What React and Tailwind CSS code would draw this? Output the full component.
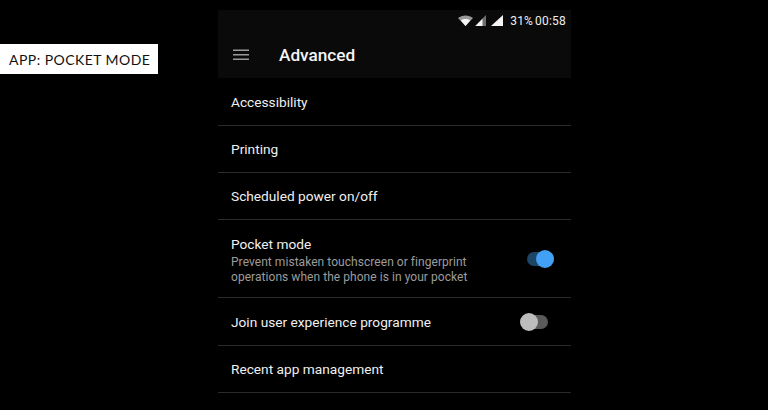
import React from "react";

function Toggle({ on }) {
  return on ? (
    <div className="relative w-[27px] h-[14px] rounded-full bg-[#1d4566]">
      <div className="absolute right-0 top-[-2px] w-[18px] h-[18px] rounded-full bg-[#42a0f5]" />
    </div>
  ) : (
    <div className="relative w-[27px] h-[14px] rounded-full bg-[#5a5a5a]">
      <div className="absolute left-[-1px] top-[-2px] w-[18px] h-[18px] rounded-full bg-[#bdbdbd]" />
    </div>
  );
}

function Row({ title, h = "h-[47px]", children, right, textClass = "" }) {
  return (
    <div className={`${h} flex items-center justify-between pl-[13px] pr-[17px] border-b border-[#2a2a2a]`}>
      <div className={textClass}>
        <div className="text-[13.7px] leading-[18px] text-[#f0f0f0]">{title}</div>
        {children}
      </div>
      {right}
    </div>
  );
}

export default function App() {
  return (
    <div className="w-[768px] h-[410px] bg-black overflow-hidden flex items-start font-['Roboto',sans-serif]">
      <div className="w-[218px] shrink-0 pt-[44px]">
        <div className="w-[158px] h-[30px] bg-white flex items-center pl-[9px] text-[14px] tracking-[0.45px] text-[#111] font-['Lato',sans-serif] whitespace-nowrap">
          APP: POCKET MODE
        </div>
      </div>
      <div className="w-[353px] shrink-0 mt-[10px]">
        <div className="h-[68px] bg-[#0a0a0a] flex flex-col">
          <div className="h-[21px] flex items-center justify-end pr-[5px] text-[#eeeeee] text-[12px] tracking-[0.2px]">
            <svg width="15" height="11" viewBox="0 0 15 11" className="mr-[2px]">
              <path d="M0 3 C4 -0.5 11 -0.5 15 3 L7.5 11 Z" fill="#9a9a9a" />
              <path d="M2.8 5.4 C5.5 3.6 9.5 3.6 12.2 5.4 L7.5 11 Z" fill="#f5f5f5" />
            </svg>
            <svg width="12" height="11" viewBox="0 0 12 11" className="mr-[4px]">
              <path d="M11 0 V11 H0 Z" fill="#6e6e6e" />
              <path d="M7.5 3.8 V11 H0.5 Z" fill="#f5f5f5" />
            </svg>
            <svg width="12" height="11" viewBox="0 0 12 11" className="mr-[7px]">
              <path d="M12 0 V11 H0 Z" fill="#f5f5f5" />
            </svg>
            <span className="whitespace-nowrap">31%</span>
            <span className="ml-[2px] whitespace-nowrap">00:58</span>
          </div>
          <div className="flex-1 flex items-center pl-[15px] pt-[1px]">
            <svg width="16" height="12" viewBox="0 0 16 12">
              <rect x="0" y="0.5" width="16" height="1.5" fill="#9a9a9a" />
              <rect x="0" y="5" width="16" height="1.5" fill="#9a9a9a" />
              <rect x="0" y="9.5" width="16" height="1.5" fill="#9a9a9a" />
            </svg>
            <div className="ml-[30px] pt-[2px] text-[17.2px] font-medium text-[#f5f5f5]">Advanced</div>
          </div>
        </div>
        <Row title="Accessibility" h="h-[48px]" textClass="pt-[1px]" />
        <Row title="Printing" />
        <Row title="Scheduled power on/off" />
        <Row
          title="Pocket mode"
          h="h-[78px]"
          textClass="pt-[2px]"
          right={<Toggle on />}
        >
          <div className="text-[12px] tracking-[0.05px] leading-[15px] text-[#9c9c9c] mt-[2px] mb-[-1px]">
            Prevent mistaken touchscreen or fingerprint
            <br />
            operations when the phone is in your pocket
          </div>
        </Row>
        <Row title="Join user experience programme" h="h-[48px]" right={<div className="mr-[6px]"><Toggle /></div>} />
        <Row title="Recent app management" />
      </div>
    </div>
  );
}
